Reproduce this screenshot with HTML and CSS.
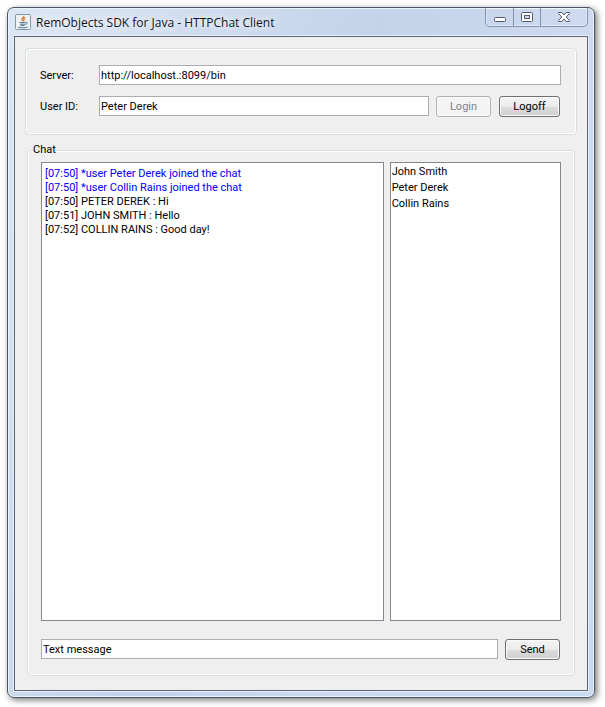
FILE: index.html
```html
<!DOCTYPE html>
<html lang="en">
<head>
    <meta charset="UTF-8">
    <meta name="viewport" content="width=device-width, initial-scale=1.0">
    <title>RemObjects SDK for Java - HTTPChat Client</title>
    <link rel="stylesheet" href="styles.css">
</head>
<body>
    <div class="window">
        <header class="titlebar">
            <svg class="app-icon" width="16" height="16" viewBox="0 0 16 16" aria-hidden="true">
                <rect x="0.5" y="0.5" width="15" height="15" rx="1" fill="#eef1f3" stroke="#8397a6"/>
                <path d="M8.6 2c.8 1.6-2.4 2.2-1.8 3.6.3.6.9.8.8 1.6M10.4 3.6c-1.8.8-2.2 1.3-1.5 2.2.4.6 0 1-.5 1.3" fill="none" stroke="#e07a28" stroke-width="1.3"/>
                <path d="M4.5 8.5h6M5 10.2h5.2M5.5 11.6h4M3 13.2c2 .8 7.5.8 9.5 0M10.8 8.2c2.2-.4 2 1.7-.4 2.2" fill="none" stroke="#517894"/>
            </svg>
            <h1>RemObjects SDK for Java - HTTPChat Client</h1>
            <div class="window-controls">
                <button type="button" class="minimize" aria-label="Minimize">
                    <svg width="14" height="12" viewBox="0 0 14 12">
                        <rect x="1.5" y="6.5" width="11" height="4" rx="1" fill="#fff" stroke="#535a6b"/>
                    </svg>
                </button>
                <button type="button" class="maximize" aria-label="Maximize">
                    <svg width="14" height="12" viewBox="0 0 14 12">
                        <rect x="1.5" y="1.5" width="11" height="9" rx="1" fill="#fff" stroke="#535a6b"/>
                        <rect x="4.5" y="4.5" width="5" height="3" fill="#c9d8ec" stroke="#535a6b"/>
                    </svg>
                </button>
                <button type="button" class="close" aria-label="Close">
                    <svg width="14" height="12" viewBox="0 0 14 12">
                        <path d="M1.5 1.5h3.3L7 4l2.2-2.5h3.3v1L9.2 6l3.3 3.5v1H9.2L7 8l-2.2 2.5H1.5v-1L4.8 6 1.5 2.5z" fill="#fff" stroke="#535a6b" stroke-linejoin="round"/>
                    </svg>
                </button>
            </div>
        </header>

        <main class="client">
            <form class="panel login-panel">
                <div class="row">
                    <label for="server">Server:</label>
                    <input type="text" id="server" name="server" value="http://localhost.:8099/bin">
                </div>
                <div class="row">
                    <label for="user-id">User ID:</label>
                    <input type="text" id="user-id" name="user-id" value="Peter Derek">
                    <button type="button" class="btn" disabled>Login</button>
                    <button type="button" class="btn btn-logoff">Logoff</button>
                </div>
            </form>

            <fieldset class="panel chat-panel">
                <legend>Chat</legend>
                <div class="chat-body">
                    <div class="messages">
                        <p class="system">[07:50] *user Peter Derek joined the chat</p>
                        <p class="system">[07:50] *user Collin Rains joined the chat</p>
                        <p>[07:50] PETER DEREK : Hi</p>
                        <p>[07:51] JOHN SMITH : Hello</p>
                        <p>[07:52] COLLIN RAINS : Good day!</p>
                    </div>
                    <ul class="users">
                        <li>John Smith</li>
                        <li>Peter Derek</li>
                        <li>Collin Rains</li>
                    </ul>
                </div>
                <div class="row">
                    <input type="text" name="message" aria-label="Message" value="Text message">
                    <button type="button" class="btn">Send</button>
                </div>
            </fieldset>
        </main>
    </div>
</body>
</html>
```
FILE: styles.css
```css
* {
    box-sizing: border-box;
    margin: 0;
    padding: 0;
}

body {
    display: flex;
    min-height: 100vh;
    padding: 7px 10px 9px 7px;
    background-color: white;
    color: black;
    font: 11px/14px Roboto, Tahoma, sans-serif;
}

.window {
    flex: 1;
    display: flex;
    flex-direction: column;
    padding: 0 6px 6px;
    border: 1px solid #4c5564;
    border-radius: 7px;
    background: linear-gradient(110deg, #dce7f5 0, #c4d3ea 45%, #cddaf0 70%, #c8daf1 100%);
    box-shadow: inset 0 0 0 1px #eaf2fb, 2px 2px 6px rgba(0, 0, 0, 0.55);
}

/* title bar */

.titlebar {
    display: flex;
    align-items: center;
    gap: 5px;
    height: 28px;
}

.titlebar h1 {
    flex: 1;
    padding-top: 1px;
    font: 12px/16px "Open Sans", "Segoe UI", sans-serif;
    color: #10151d;
    text-shadow: 0 0 8px white, 0 0 8px white;
}

.app-icon {
    margin-left: 1px;
}

.window-controls {
    align-self: flex-start;
    display: flex;
    border: 1px solid #8594ab;
    border-top: none;
    border-radius: 0 0 5px 5px;
    box-shadow: inset 0 0 0 1px rgba(255, 255, 255, 0.4);
}

.window-controls button {
    display: flex;
    align-items: center;
    justify-content: center;
    width: 27px;
    height: 18px;
    border: none;
    background: none;
}

.window-controls .maximize {
    width: 28px;
    border-left: 1px solid #8594ab;
    border-right: 1px solid #8594ab;
}

.window-controls .close {
    width: 46px;
}

/* content */

.client {
    flex: 1;
    display: flex;
    flex-direction: column;
    gap: 8px;
    padding: 11px 10px 14px;
    border: 1px solid #5b6575;
    background-color: #efefef;
    box-shadow: 0 0 0 1px #e6effa;
}

.panel {
    border: 1px solid #d5dfe5;
    border-radius: 4px;
    box-shadow: inset 1px 1px 0 white, inset -1px -1px 0 white;
}

.row {
    display: flex;
    align-items: flex-start;
    gap: 7px;
}

.row label {
    width: 52px;
    line-height: 22px;
}

.row input {
    flex: 1;
    min-width: 0;
    height: 20px;
    padding: 0 1px;
    border: 1px solid #abadb3;
    background-color: white;
    color: black;
    font: inherit;
}

.btn {
    width: 55px;
    height: 21px;
    border: 1px solid #707070;
    border-radius: 3px;
    background: linear-gradient(#f4f4f4 0, #ebebeb 50%, #dcdcdc 50%, #cfcfcf 100%);
    box-shadow: inset 0 0 0 1px #fafafa;
    color: black;
    font: inherit;
}

.btn:last-child {
    margin-right: 1px;
}

.btn + .btn {
    margin-left: 1px;
}

.btn:disabled {
    border-color: #adb2b5;
    background: #f4f4f4;
    color: #838383;
}

.btn-logoff {
    width: 61px;
}

.login-panel {
    display: flex;
    flex-direction: column;
    gap: 9px;
    padding: 16px 15px 16px 14px;
}

.chat-panel {
    flex: 1;
    display: flex;
    flex-direction: column;
    gap: 18px;
    margin: 0 2px;
    padding: 5px 13px 15px;
}

.chat-panel legend {
    margin-left: -8px;
    background-color: #efefef;
}

.chat-body {
    flex: 1;
    display: grid;
    grid-template-columns: 2fr 1fr;
    gap: 6px;
}

.messages,
.users {
    border: 1px solid #828790;
    background-color: white;
}

.messages {
    padding: 4px 3px;
}

.messages .system {
    color: #0000ff;
}

.users {
    padding: 1px;
    list-style-type: none;
    line-height: 16px;
}
```
